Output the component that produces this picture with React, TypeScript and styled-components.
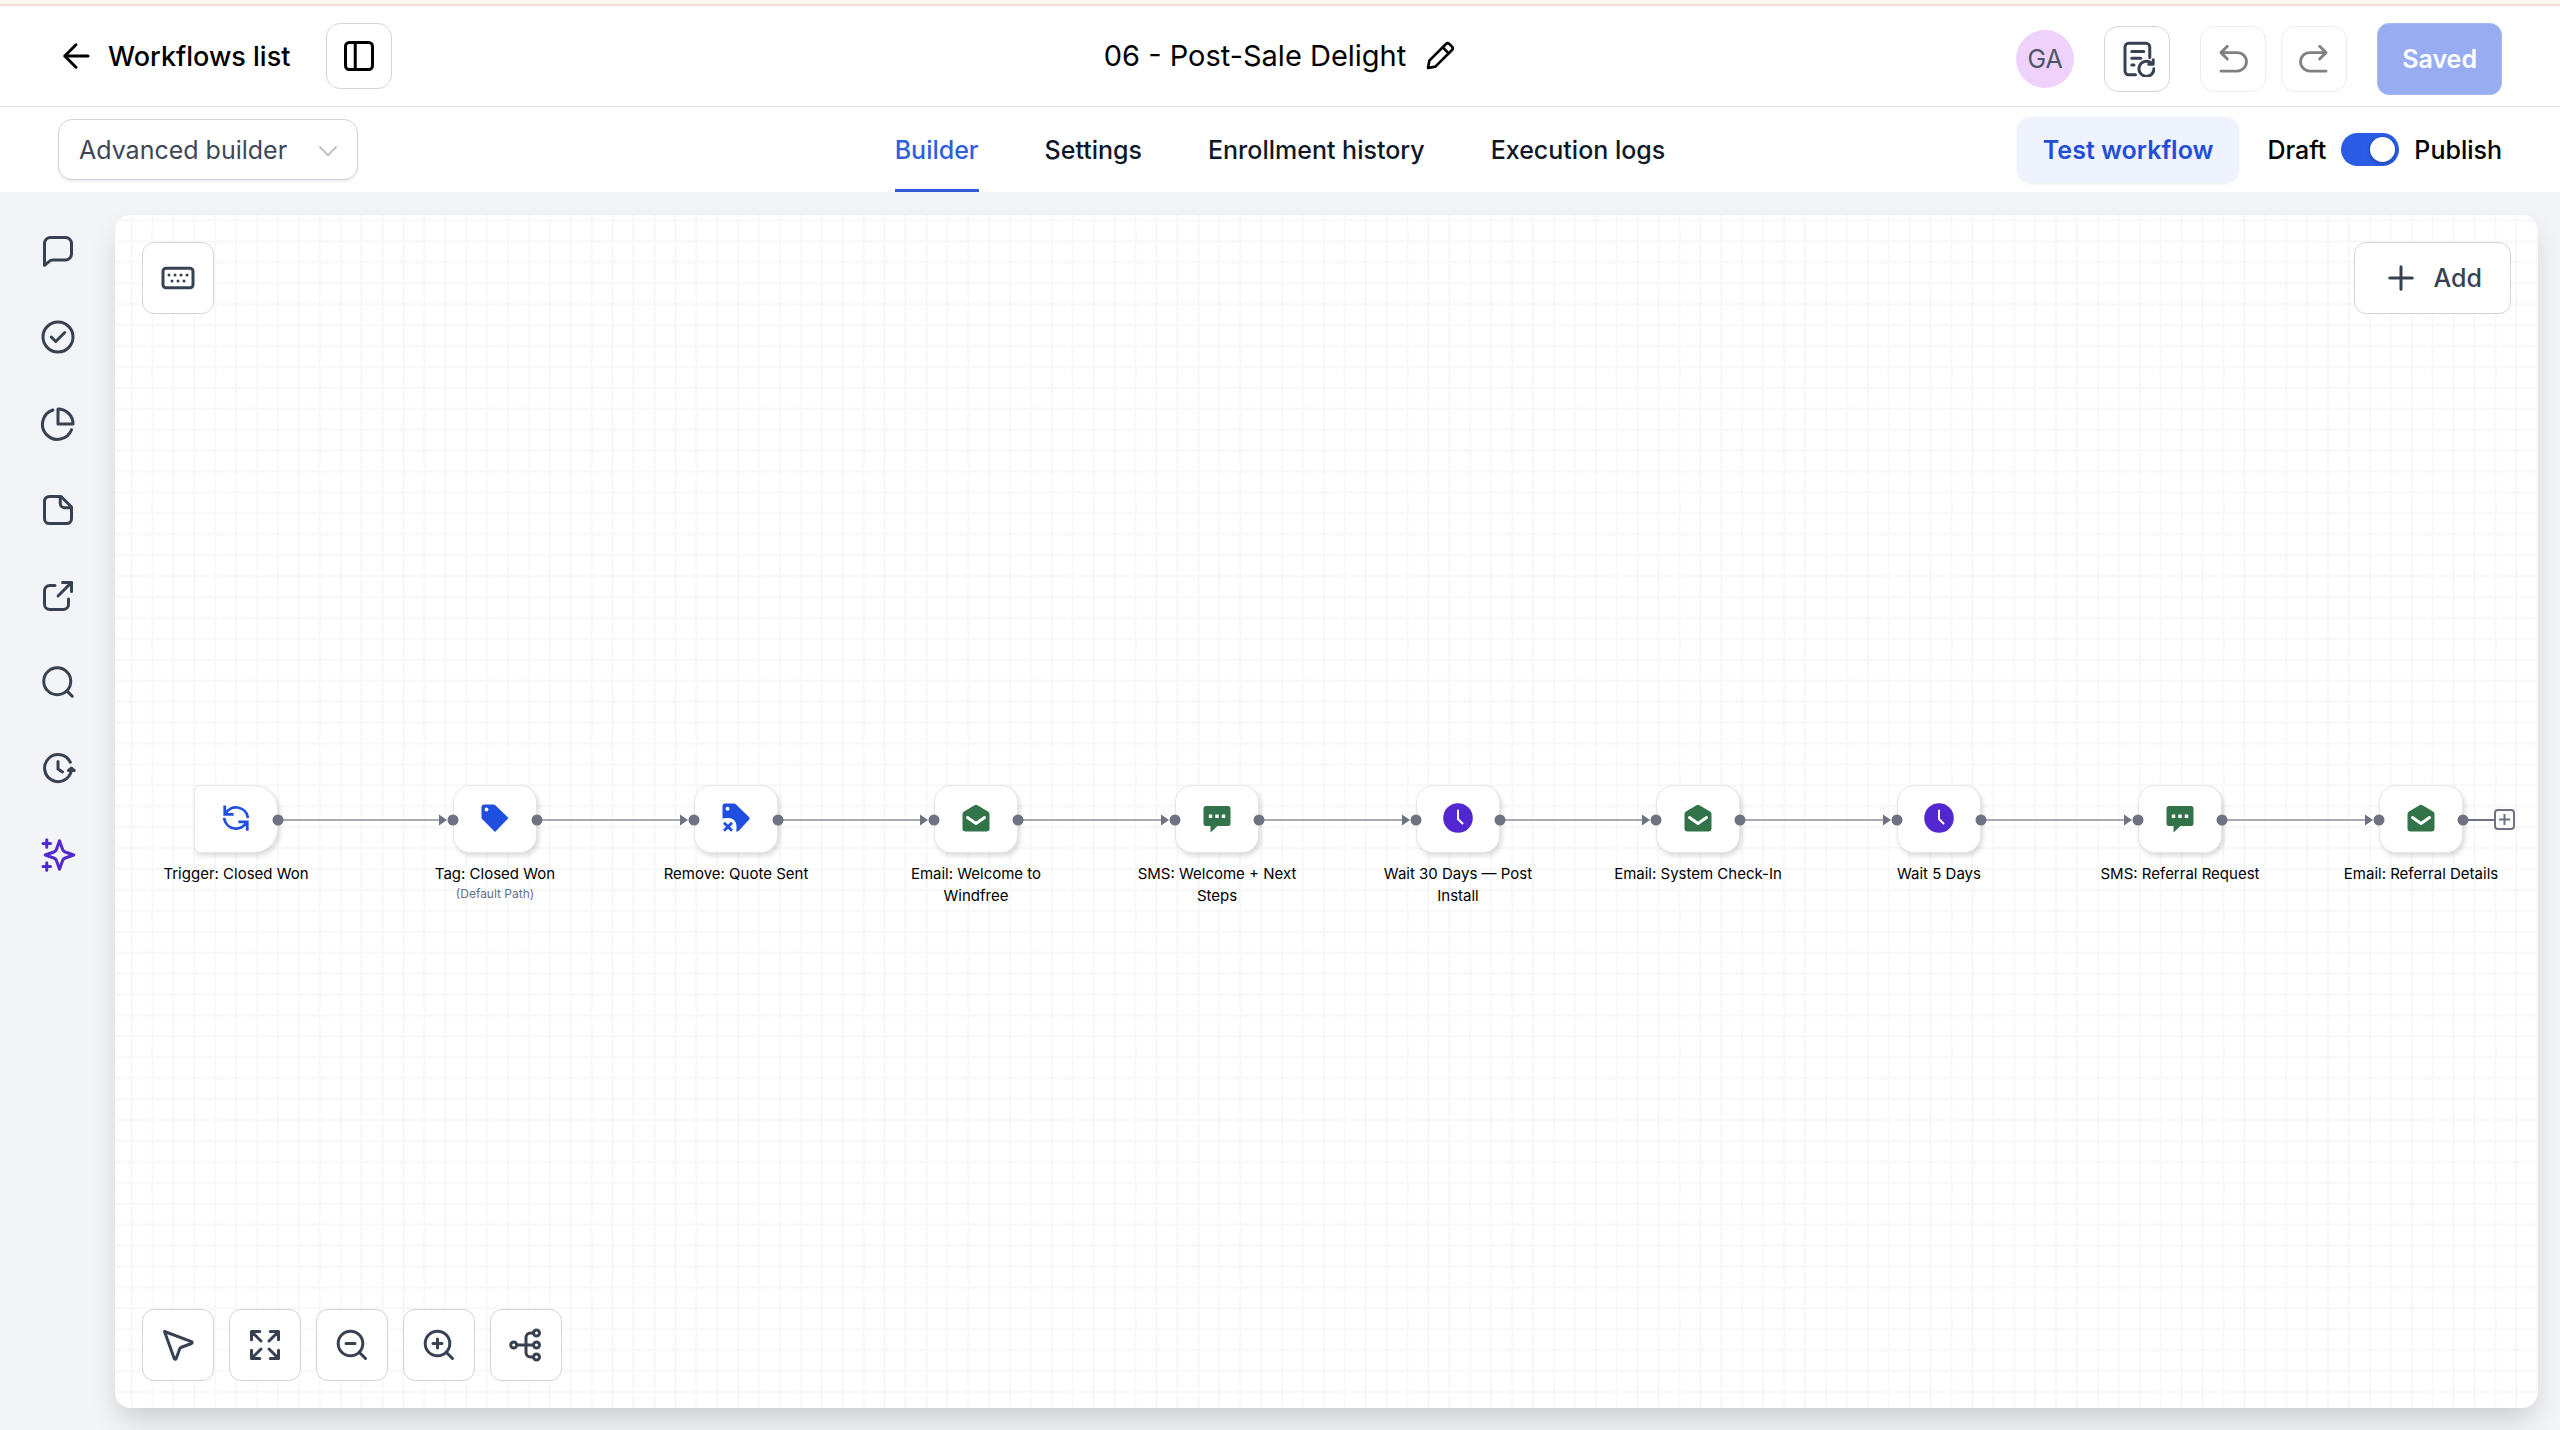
import React from "react";
import styled, { createGlobalStyle, css } from "styled-components";

const Global = createGlobalStyle`
  * { box-sizing: border-box; }
  body { margin: 0; font-family: Inter, "Liberation Sans", sans-serif; color: #000; }
  button, select { font: inherit; color: inherit; cursor: pointer; }
  svg { display: block; flex: none; }
`;

const Page = styled.div`
  min-height: 100vh;
  display: flex;
  flex-direction: column;
  background: #f2f4f8;
`;

const TopStrip = styled.div`
  height: 6px;
  background: #fdf6ef;
  border-bottom: 2px solid #f3dfd5;
`;

const bar = css`
  display: grid;
  grid-template-columns: 1fr auto 1fr;
  align-items: center;
  padding: 0 58px;
  background: #fff;
`;

const Header = styled.header`
  ${bar}
  height: 101px;
  border-bottom: 1px solid #e6e8eb;
`;

const SubHeader = styled.div`
  ${bar}
  height: 85px;
`;

const Group = styled.div<{ $gap: number; $end?: boolean }>`
  display: flex;
  align-items: center;
  gap: ${(p) => p.$gap}px;
  justify-content: ${(p) => (p.$end ? "flex-end" : "flex-start")};
`;

const HeaderActions = styled(Group)`
  padding-top: 6px;
`;

const BackLink = styled.a`
  display: flex;
  align-items: center;
  gap: 14px;
  color: #000;
  text-decoration: none;
  font-size: 27px;
  font-weight: 500;
`;

const IconButton = styled.button<{ $faded?: boolean }>`
  width: 66px;
  height: 66px;
  display: grid;
  place-items: center;
  padding: 0;
  background: #fff;
  border: 1px solid ${(p) => (p.$faded ? "#ebedef" : "#d2d6dc")};
  border-radius: 14px;
  color: ${(p) => (p.$faded ? "#808080" : "#384152")};
`;

const PanelButton = styled(IconButton)`
  color: #000;
`;

const TitleBox = styled.div`
  display: flex;
  align-items: center;
  gap: 18px;
`;

const Title = styled.h1`
  margin: 0;
  font-size: 29px;
  line-height: 36px;
  font-weight: 400;
`;

const PlainButton = styled.button`
  display: grid;
  place-items: center;
  padding: 0;
  border: 0;
  background: none;
`;

const Avatar = styled.div`
  width: 58px;
  height: 58px;
  display: grid;
  place-items: center;
  border-radius: 50%;
  background: #efd2fb;
  color: #4b5568;
  font-size: 25px;
`;

const SavedButton = styled.button`
  height: 72px;
  padding: 0 24px;
  border: 1px solid #a9baf3;
  border-radius: 12px;
  background: #98adf1;
  color: #fff;
  font-size: 25px;
  font-weight: 600;
`;

const SelectWrap = styled.div`
  position: relative;
  width: 300px;
`;

const Select = styled.select`
  appearance: none;
  width: 100%;
  height: 61px;
  padding: 0 20px;
  border: 1px solid #d0d4da;
  border-radius: 14px;
  background: #fff;
  box-shadow: 0 2px 3px rgba(16, 24, 40, 0.07);
  color: #3d4759;
  font-size: 25px;
`;

const SelectArrow = styled.span`
  position: absolute;
  right: 20px;
  top: 26px;
  color: #c2c2c2;
  pointer-events: none;
`;

const Tabs = styled.nav`
  display: flex;
  gap: 66px;
  height: 100%;
`;

const Tab = styled.a<{ $active?: boolean }>`
  display: flex;
  align-items: center;
  height: 100%;
  border-top: 3px solid transparent;
  border-bottom: 3px solid ${(p) => (p.$active ? "#2f5bdc" : "transparent")};
  color: ${(p) => (p.$active ? "#2f5fe0" : "#101828")};
  text-decoration: none;
  font-size: 25px;
  font-weight: 500;
`;

const TestButton = styled.button`
  height: 66px;
  padding: 0 26px;
  border: 0;
  border-radius: 14px;
  background: #eff3fe;
  box-shadow: 0 1px 3px rgba(16, 24, 40, 0.07);
  color: #1f4fd8;
  font-size: 25px;
  font-weight: 600;
`;

const PublishLabel = styled.label`
  display: flex;
  align-items: center;
  gap: 15px;
  font-size: 25px;
  font-weight: 500;
`;

const Switch = styled.input`
  appearance: none;
  width: 58px;
  height: 33px;
  margin: 0;
  padding: 4px;
  display: flex;
  justify-content: flex-start;
  border-radius: 17px;
  background: #98a2b3;
  cursor: pointer;

  &::before {
    content: "";
    width: 25px;
    height: 25px;
    border-radius: 50%;
    background: #fff;
    box-shadow: 0 1px 4px rgba(0, 0, 0, 0.35);
  }

  &:checked {
    justify-content: flex-end;
    background: #2b5ce6;
  }
`;

const Main = styled.main`
  flex: 1;
  display: flex;
  padding: 23px 22px 22px 0;
`;

const Sidebar = styled.aside`
  width: 115px;
  height: 658px;
  padding-top: 18px;
  display: flex;
  flex-direction: column;
  align-items: center;
  justify-content: space-between;
`;

const SideButton = styled(PlainButton)<{ $accent?: boolean }>`
  color: ${(p) => (p.$accent ? "#5129cc" : "#384152")};
`;

const Canvas = styled.section`
  position: relative;
  flex: 1;
  display: flex;
  flex-direction: column;
  justify-content: space-between;
  padding: 27px;
  border-radius: 16px;
  background: #fff;
  overflow: hidden;
  box-shadow: 0 14px 28px -4px rgba(0, 0, 0, 0.17);
`;

const Grid = styled.svg`
  position: absolute;
  inset: 0;
  width: 100%;
  height: 100%;
`;

const ToolRow = styled.div<{ $spread?: boolean }>`
  position: relative;
  display: flex;
  gap: 15px;
  justify-content: ${(p) => (p.$spread ? "space-between" : "flex-start")};
`;

const ToolButton = styled.button<{ $wide?: boolean }>`
  min-width: 72px;
  height: 72px;
  display: flex;
  align-items: center;
  justify-content: center;
  gap: 15px;
  padding: 0 ${(p) => (p.$wide ? 28 : 0)}px;
  border: 1px solid #d0d4da;
  border-radius: 12px;
  background: #fff;
  color: #384152;
  font-size: 25px;
  font-weight: 500;
`;

const Flow = styled.div`
  position: absolute;
  inset: 0;
`;

const NodeBox = styled.div<{ $x: number }>`
  position: absolute;
  left: ${(p) => p.$x}px;
  top: 570px;
  width: 172px;
  margin-left: -86px;
  display: flex;
  flex-direction: column;
  align-items: center;
`;

const NodeTile = styled.button<{ $trigger?: boolean }>`
  width: 84px;
  height: 68px;
  display: grid;
  place-items: center;
  padding: 0 0 2px;
  border: 1px solid #e4e6ea;
  border-radius: ${(p) => (p.$trigger ? "6px 24px 24px 6px" : "17px")};
  background: #fff;
  box-shadow: 2px 3px 5px rgba(0, 0, 0, 0.14);
`;

const NodeLabel = styled.div`
  margin-top: 10px;
  font-size: 15px;
  line-height: 22px;
  text-align: center;
`;

const NodeNote = styled.div`
  font-size: 12px;
  line-height: 18px;
  color: #667085;
`;

const Wires = styled.svg`
  position: absolute;
  left: 0;
  top: 590px;
  width: 100%;
  height: 30px;
  pointer-events: none;
`;

const AddStep = styled.button`
  position: absolute;
  left: 2379px;
  top: 594px;
  width: 21px;
  height: 21px;
  display: grid;
  place-items: center;
  padding: 0;
  border: 2px solid #6f7280;
  border-radius: 4px;
  background: #fff;
  color: #6f7280;
`;

type IconProps = { size?: number; w?: number; children: React.ReactNode };

const Line = ({ size = 36, w = 2, children }: IconProps) => (
  <svg
    width={size}
    height={size}
    viewBox="0 0 24 24"
    fill="none"
    stroke="currentColor"
    strokeWidth={w}
    strokeLinecap="round"
    strokeLinejoin="round"
    aria-hidden="true"
  >
    {children}
  </svg>
);

const sideIcons = [
  { name: "Comments", icon: <path d="M3 7a4 4 0 0 1 4-4h10a4 4 0 0 1 4 4v7a4 4 0 0 1-4 4H8.500c-1.200 0-1.900.5-2.700 1.200L3 21.500z" /> },
  { name: "Checks", icon: <><circle cx="12" cy="12" r="10" /><path d="M7.5 12l3 3 6-6" /></> },
  { name: "Statistics", icon: <><path d="M12 2a10 10 0 0 1 10 10H12z" /><path d="M8.600 2.700A10 10 0 1 0 21 15.800" /></> },
  { name: "Notes", icon: <><path d="M14 3H6.200A3.200 3.200 0 0 0 3 6.200v11.600A3.200 3.200 0 0 0 6.200 21h11.600a3.200 3.200 0 0 0 3.200-3.200V10z" /><path d="M13.500 3v4.500a3 3 0 0 0 3 3H21" /></> },
  { name: "Open", icon: <><path d="M21 9V3h-6" /><path d="M21 3l-9 9" /><path d="M10 5H6.500A3.500 3.500 0 0 0 3 8.500v9A3.500 3.500 0 0 0 6.500 21h9a3.500 3.500 0 0 0 3.500-3.500V14" /></> },
  { name: "Search", icon: <><circle cx="11.500" cy="11.500" r="9" /><path d="M21.500 21.500l-3.600-3.600" /></> },
  { name: "History", icon: <><path d="M19 13l1.900-1.600 1.900 1.600z" /><path d="M20.900 13.200A9 9 0 1 1 20.200 7.500" /><path d="M12 7v5l3 2" /></> },
  { name: "Assistant", icon: <><path d="M13 2.500l2 5.700c.3.900.9 1.500 1.800 1.800l5.700 2-5.700 2c-.9.300-1.500.9-1.800 1.800l-2 5.700-2-5.700c-.3-.9-.9-1.500-1.800-1.800L3.500 12l5.700-2c.9-.3 1.500-.9 1.800-1.800z" /><path d="M4.500 1.800v5M2 4.300h5M4.500 17.200v5M2 19.700h5" /></> },
];

const icons = {
  trigger: (
    <svg width="30" height="30" viewBox="0 0 24 24" fill="none" stroke="#1f4fe0" strokeWidth="2.200" strokeLinecap="square">
      <path d="M3 3v6h6M3.600 8.600A9.500 9.500 0 0 1 21.300 11M21 21v-6h-6M20.400 15.400A9.500 9.500 0 0 1 2.700 13" />
    </svg>
  ),
  tag: (
    <svg width="30" height="30" viewBox="0 0 30 30">
      <path d="M1.500 4.500a3 3 0 0 1 3-3h9a2 2 0 0 1 1.500.6L28.500 15 15 29 2.100 16a2 2 0 0 1-.6-1.500z" fill="#1f4fe0" />
      <circle cx="6.500" cy="6.500" r="1.900" fill="#fff" />
    </svg>
  ),
  remove: (
    <svg width="30" height="30" viewBox="0 0 30 30">
      <path d="M1.500 3a2.500 2.500 0 0 1 2.500-2.500h9a2.500 2.500 0 0 1 1.800.7L28 14a2 2 0 0 1 0 2.800L18 27.500a3 3 0 0 1-2.800.9C16.500 22 15 15 7 15a12 12 0 0 0-5.500.5z" fill="#1f4fe0" />
      <circle cx="6.500" cy="5.800" r="2" fill="#fff" />
      <path d="M3 19.800l8 8M11 19.800l-8 8" stroke="#1f4fe0" strokeWidth="2.800" />
    </svg>
  ),
  email: (
    <svg width="30" height="30" viewBox="0 0 30 30">
      <path d="M13.500 2.300a3 3 0 0 1 3 0L27 8.500a3 3 0 0 1 1.500 2.500v14.500a3 3 0 0 1-3 3h-21a3 3 0 0 1-3-3V11A3 3 0 0 1 3 8.500z" fill="#32734a" />
      <path d="M6.500 14.500l8.500 6 8.500-6" fill="none" stroke="#fff" strokeWidth="3" strokeLinecap="round" strokeLinejoin="round" />
    </svg>
  ),
  sms: (
    <svg width="30" height="30" viewBox="0 0 30 30">
      <path d="M4 3h22a2.500 2.500 0 0 1 2.500 2.500v15A2.500 2.500 0 0 1 26 23H15.500l-7 6.500V23H4a2.500 2.500 0 0 1-2.500-2.500v-15A2.500 2.500 0 0 1 4 3z" fill="#32734a" />
      <path d="M6.800 11.500h3.400v3.400H6.800zM13.300 11.500h3.400v3.400h-3.400zM19.800 11.500h3.400v3.400h-3.400z" fill="#fff" />
    </svg>
  ),
  wait: (
    <svg width="30" height="30" viewBox="0 0 30 30">
      <circle cx="15" cy="15" r="14.800" fill="#5227d0" />
      <path d="M15 7.500v8.500l4.500 4.500" fill="none" stroke="#fff" strokeWidth="2" strokeLinecap="round" />
    </svg>
  ),
};

type Step = { x: number; icon: keyof typeof icons; label: string; note?: string };

const steps: Step[] = [
  { x: 121, icon: "trigger", label: "Trigger: Closed Won" },
  { x: 380, icon: "tag", label: "Tag: Closed Won", note: "(Default Path)" },
  { x: 621, icon: "remove", label: "Remove: Quote Sent" },
  { x: 861, icon: "email", label: "Email: Welcome to Windfree" },
  { x: 1102, icon: "sms", label: "SMS: Welcome + Next Steps" },
  { x: 1343, icon: "wait", label: "Wait 30 Days — Post Install" },
  { x: 1583, icon: "email", label: "Email: System Check-In" },
  { x: 1824, icon: "wait", label: "Wait 5 Days" },
  { x: 2065, icon: "sms", label: "SMS: Referral Request" },
  { x: 2306, icon: "email", label: "Email: Referral Details" },
];

const canvasTools = [
  { name: "Select", icon: <Line><path d="M3 3l6.500 18c.3.600 1 .6 1.300 0l2.300-6.300a2 2 0 0 1 1.200-1.200l6.700-2.500c.6-.3.600-1.100 0-1.300z" /></Line> },
  { name: "Fit view", icon: <Line><path d="M3 8.500V3h5.500M3.300 3.300l6 6M15.500 3H21v5.500M20.700 3.300l-6 6M3 15.500V21h5.500M3.300 20.700l6-6M21 15.500V21h-5.500M20.700 20.700l-6-6" /></Line> },
  { name: "Zoom out", icon: <Line><circle cx="11" cy="11" r="8.200" /><path d="M21 21l-4.200-4.200M8 11h6" /></Line> },
  { name: "Zoom in", icon: <Line><circle cx="11" cy="11" r="8.200" /><path d="M21 21l-4.200-4.200M8 11h6M11 8v6" /></Line> },
  { name: "Arrange", icon: <Line><circle cx="3.800" cy="12" r="2" /><circle cx="19" cy="4" r="2" /><circle cx="19" cy="12" r="2" /><circle cx="19" cy="20" r="2" /><path d="M6 12h11M17 4h-2a3 3 0 0 0-3 3v10a3 3 0 0 0 3 3h2" /></Line> },
];

export default function App() {
  return (
    <>
      <Global />
      <Page>
        <TopStrip />
        <Header>
          <Group $gap={36}>
            <BackLink href="#">
              <Line size={36}><path d="M20 12H4.500M12 4.500L4.500 12l7.500 7.500" /></Line>
              Workflows list
            </BackLink>
            <PanelButton aria-label="Toggle panel">
              <Line size={36}><rect x="3" y="3" width="18" height="18" rx="2.500" /><path d="M9.500 3v18" /></Line>
            </PanelButton>
          </Group>
          <TitleBox>
            <Title>06 - Post-Sale Delight</Title>
            <PlainButton aria-label="Rename">
              <Line size={32} w={2}><path d="M3 21l1-5.500L16.500 3a1.800 1.800 0 0 1 2.500 0L21 5a1.800 1.800 0 0 1 0 2.500L8.500 20zM14 5.500l4.500 4.500" /></Line>
            </PlainButton>
          </TitleBox>
          <HeaderActions $gap={30} $end>
            <Avatar>GA</Avatar>
            <IconButton aria-label="Version history">
              <Line><path d="M11 22.500H6.500A2.500 2.500 0 0 1 4 20V4a2.500 2.500 0 0 1 2.500-2.500H18A2.500 2.500 0 0 1 20.500 4v7M8.500 7h8M8.500 11.500h6M8.500 16h1.500" /><path d="M23.300 18.500a5 5 0 1 1-2.300-4.200M22.800 12.500v3h-3" /></Line>
            </IconButton>
            <Group $gap={15}>
              <IconButton $faded aria-label="Undo">
                <Line size={34}><path d="M8 3L3.500 7.500 8 12M3.500 7.500H15a6.500 6.500 0 0 1 0 13H3.500" /></Line>
              </IconButton>
              <IconButton $faded aria-label="Redo">
                <Line size={34}><path d="M16 3l4.500 4.500L16 12M20.500 7.500H9a6.500 6.500 0 0 0 0 13h11.500" /></Line>
              </IconButton>
            </Group>
            <SavedButton>Saved</SavedButton>
          </HeaderActions>
        </Header>
        <SubHeader>
          <SelectWrap>
            <Select aria-label="Builder mode" defaultValue="advanced">
              <option value="advanced">Advanced builder</option>
            </Select>
            <SelectArrow>
              <svg width="20" height="12" viewBox="0 0 20 12" fill="none" stroke="currentColor" strokeWidth="2"><path d="M1.500 1.500L10 10.300l8.500-8.800" /></svg>
            </SelectArrow>
          </SelectWrap>
          <Tabs>
            <Tab href="#" $active>Builder</Tab>
            <Tab href="#">Settings</Tab>
            <Tab href="#">Enrollment history</Tab>
            <Tab href="#">Execution logs</Tab>
          </Tabs>
          <Group $gap={28} $end>
            <TestButton>Test workflow</TestButton>
            <PublishLabel>
              Draft
              <Switch type="checkbox" role="switch" defaultChecked />
              Publish
            </PublishLabel>
          </Group>
        </SubHeader>
        <Main>
          <Sidebar>
            {sideIcons.map((s) => (
              <SideButton key={s.name} aria-label={s.name} $accent={s.name === "Assistant"}>
                <Line size={36}>{s.icon}</Line>
              </SideButton>
            ))}
          </Sidebar>
          <Canvas>
            <Grid aria-hidden="true">
              <defs>
                <pattern id="grid" x="6" y="-5" width="20.92" height="20.92" patternUnits="userSpaceOnUse">
                  <path d="M0 10.460H20.920M10.460 0V20.920" stroke="#f7f7f7" strokeWidth="2" />
                </pattern>
              </defs>
              <rect width="100%" height="100%" fill="url(#grid)" />
            </Grid>
            <Flow>
              {steps.map((s, i) => (
                <NodeBox key={s.x} $x={s.x}>
                  <NodeTile $trigger={i === 0} aria-label={s.label}>{icons[s.icon]}</NodeTile>
                  <NodeLabel>{s.label}</NodeLabel>
                  {s.note && <NodeNote>{s.note}</NodeNote>}
                </NodeBox>
              ))}
              <Wires aria-hidden="true">
                {steps.slice(1).map((s, i) => (
                  <g key={s.x} fill="#6f7280">
                    <path d={`M${steps[i].x + 42} 15H${s.x - 52}`} stroke="#aaaab2" strokeWidth="2" />
                    <circle cx={steps[i].x + 42} cy="15" r="5.500" />
                    <path d={`M${s.x - 56} 9.500l8 5.500-8 5.500z`} />
                    <circle cx={s.x - 42} cy="15" r="5.500" />
                  </g>
                ))}
                <path d="M2348 15H2380" stroke="#6f7280" strokeWidth="2" />
                <circle cx="2348" cy="15" r="5.500" fill="#6f7280" />
              </Wires>
              <AddStep aria-label="Add step">
                <svg width="11" height="11" viewBox="0 0 11 11" stroke="currentColor" strokeWidth="2"><path d="M5.500 0v11M0 5.500h11" /></svg>
              </AddStep>
            </Flow>
            <ToolRow $spread>
              <ToolButton aria-label="Keyboard shortcuts">
                <Line><rect x="2" y="5.500" width="20" height="13" rx="2" /><path d="M6 10h.01M10 10h.01M14 10h.01M18 10h.01M8 14h.01M12 14h.01M16 14h.01" /></Line>
              </ToolButton>
              <ToolButton $wide>
                <Line><path d="M12 4.500v15M4.500 12h15" /></Line>
                Add
              </ToolButton>
            </ToolRow>
            <ToolRow>
              {canvasTools.map((t) => (
                <ToolButton key={t.name} aria-label={t.name}>{t.icon}</ToolButton>
              ))}
            </ToolRow>
          </Canvas>
        </Main>
      </Page>
    </>
  );
}
